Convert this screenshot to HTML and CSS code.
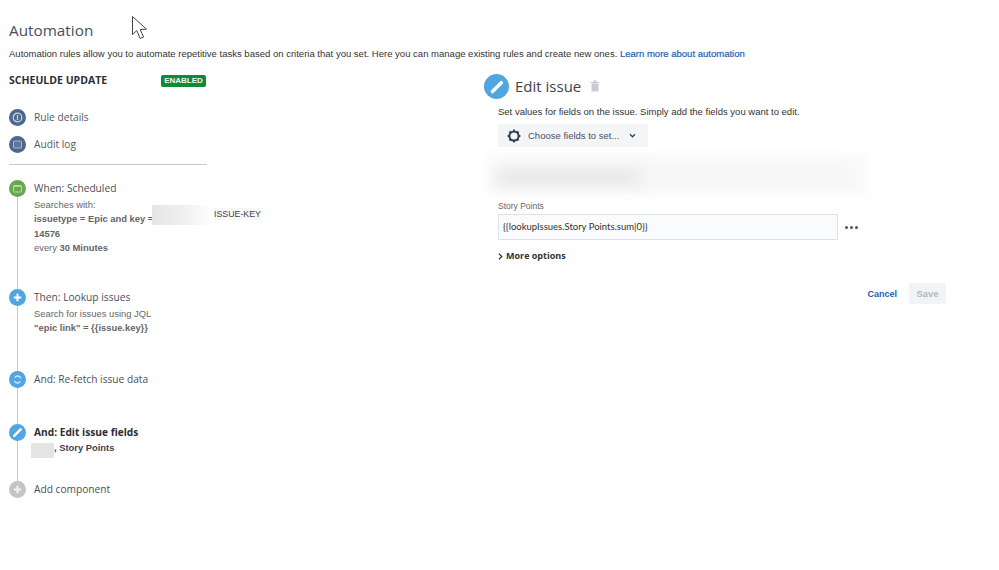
FILE: index.html
```html
<!DOCTYPE html>
<html lang="en">
<head>
<meta charset="utf-8">
<title>Automation</title>
<link rel="stylesheet" href="styles.css">
</head>
<body>
<svg class="cursor" width="18" height="26" viewBox="0 0 18 26"><path d="M1.5 1.5V19.5L5.8 15.6L9.2 23.5L12.6 22L9.2 14.5L15.5 14.2Z" fill="#fff" stroke="#444" stroke-width="1"/></svg>
<header class="page-head">
  <h1>Automation</h1>
  <p>Automation rules allow you to automate repetitive tasks based on criteria that you set. Here you can manage existing rules and create new ones. <a href="#">Learn more about automation</a></p>
</header>
<main class="columns">
  <section class="left">
    <div class="rule-head">
      <h2>SCHEULDE UPDATE</h2>
      <span class="lozenge">ENABLED</span>
    </div>
    <nav class="rule-nav">
      <div class="nav-row">
        <span class="dot navy"><svg width="11" height="11" viewBox="0 0 11 11"><circle cx="5.5" cy="5.5" r="4.3" fill="none" stroke="#cfd8e6" stroke-width="1.2"/><rect x="4.9" y="3" width="1.2" height="5" fill="#cfd8e6"/></svg></span>
        <span>Rule details</span>
      </div>
      <div class="nav-row">
        <span class="dot navy"><svg width="11" height="11" viewBox="0 0 11 11"><rect x="1.5" y="2" width="8" height="7" rx="1" fill="#5d7699" stroke="#a9b8cd"/></svg></span>
        <span>Audit log</span>
      </div>
    </nav>
    <div class="timeline">
      <div class="rail"></div>
      <div class="step step-when">
        <span class="dot green"><svg width="11" height="11" viewBox="0 0 11 11"><rect x="1.5" y="2.5" width="8" height="6.5" rx="1" fill="none" stroke="#bcdcaa" stroke-width="1"/><rect x="1.5" y="2.5" width="8" height="1.4" fill="#bcdcaa"/></svg></span>
        <div class="step-body">
          <h3>When: Scheduled</h3>
          <p class="detail">Searches with:<br><b>issuetype = Epic and key =</b><br><b>14576</b><br>every <b>30 Minutes</b></p>
        </div>
      </div>
      <div class="step step-then">
        <span class="dot blue"><svg width="11" height="11" viewBox="0 0 11 11"><path d="M5.5 1.8V9.2M1.8 5.5H9.2" stroke="#fff" stroke-width="2"/></svg></span>
        <div class="step-body">
          <h3>Then: Lookup issues</h3>
          <p class="detail">Search for issues using JQL<br><b>"epic link" = {{issue.key}}</b></p>
        </div>
      </div>
      <div class="step step-refetch">
        <span class="dot blue"><svg width="11" height="11" viewBox="0 0 11 11"><path d="M8.8 4.2A3.5 3.5 0 0 0 2.6 3.6M2.2 6.8A3.5 3.5 0 0 0 8.4 7.4" fill="none" stroke="#cfe6f6" stroke-width="1.3"/></svg></span>
        <div class="step-body"><h3>And: Re-fetch issue data</h3></div>
      </div>
      <div class="step step-edit">
        <span class="dot blue"><svg width="11" height="11" viewBox="0 0 11 11"><path d="M2.2 8.8L8.6 2.4" stroke="#fff" stroke-width="2.6" stroke-linecap="round"/></svg></span>
        <div class="step-body">
          <h3 class="strong">And: Edit issue fields</h3>
          <p class="detail dark"><b>, Story Points</b></p>
        </div>
      </div>
      <div class="step step-add">
        <span class="dot grey"><svg width="11" height="11" viewBox="0 0 11 11"><path d="M5.5 1.8V9.2M1.8 5.5H9.2" stroke="#f2f2f2" stroke-width="2"/></svg></span>
        <div class="step-body"><h3>Add component</h3></div>
      </div>
      <div class="smudge-key"></div>
      <span class="issue-key">ISSUE-KEY</span>
      <div class="smudge-field"></div>
    </div>
  </section>
  <section class="right">
    <div class="edit-head">
      <span class="dot big blue"><svg width="16" height="16" viewBox="0 0 16 16"><path d="M3.5 12.5L12.3 3.7" stroke="#fff" stroke-width="3.6" stroke-linecap="round"/></svg></span>
      <h2>Edit issue</h2>
      <svg class="trash" width="10" height="12" viewBox="0 0 10 12"><path d="M0.5 2H9.5V3H0.5ZM3.5 0.6H6.5V2H3.5ZM1.5 3.6H8.5V11.5H1.5Z" fill="#c8ccd2"/></svg>
    </div>
    <div class="form">
      <p class="intro">Set values for fields on the issue. Simply add the fields you want to edit.</p>
      <button class="choose" type="button">
        <svg width="14" height="14" viewBox="0 0 14 14"><circle cx="7" cy="7" r="4.6" fill="none" stroke="#2f3d56" stroke-width="2"/><path d="M7 0.6V2.6M7 11.4V13.4M0.6 7H2.6M11.4 7H13.4M2.5 2.5L3.9 3.9M10.1 10.1L11.5 11.5M2.5 11.5L3.9 10.1M10.1 3.9L11.5 2.5" stroke="#2f3d56" stroke-width="1.8"/></svg>
        <span>Choose fields to set...</span>
        <svg class="chev" width="7" height="5" viewBox="0 0 8 6"><path d="M1 1.5L4 4.5L7 1.5" fill="none" stroke="#2f3d56" stroke-width="1.5"/></svg>
      </button>
      <div class="blur-field"><div class="blur-a"></div><div class="blur-b"></div></div>
      <label class="field-label">Story Points</label>
      <div class="field-row">
        <div class="input">{{lookupIssues.Story Points.sum|0}}</div>
        <span class="more-dots"><i></i><i></i><i></i></span>
      </div>
      <div class="more-options">
        <svg width="5" height="7" viewBox="0 0 5 7"><path d="M1 0.8L3.8 3.5L1 6.2" fill="none" stroke="#333" stroke-width="1.2"/></svg>
        <span>More options</span>
      </div>
      <div class="actions">
        <a class="cancel" href="#">Cancel</a>
        <button class="save" type="button">Save</button>
      </div>
    </div>
  </section>
</main>
</body>
</html>
```
FILE: styles.css
```css
* { box-sizing: border-box; }
html, body { margin: 0; height: 100%; }
body {
  position: relative;
  width: 999px;
  height: 570px;
  overflow: hidden;
  background: #fff;
  color: #333;
  font-family: "Liberation Sans", Arial, sans-serif;
  padding: 21px 0 0 9px;
}
h1, h2, h3, p { margin: 0; font-weight: 400; }
.cursor { position: absolute; left: 131px; top: 15px; }
.page-head h1 {
  font: 400 15.3px/19px "Open Sans", sans-serif;
  color: #4a4f57;
}
.page-head p {
  margin-top: 7px;
  font-size: 9.52px;
  line-height: 13px;
  color: #333;
}
.page-head a { color: #1d5fb0; text-decoration: none; -webkit-text-stroke: 0.2px #1d5fb0; }
.columns { display: grid; grid-template-columns: 197px 462px; column-gap: 278px; margin-top: 13px; }
.rule-head { display: flex; align-items: center; justify-content: space-between; height: 14px; }
.rule-head h2 { font: 700 10.5px/14px "Open Sans", sans-serif; color: #2b2f36; }
.lozenge {
  margin-top: 2px;
  width: 45px;
  height: 12px;
  border-radius: 2px;
  background: #11893a;
  color: #eaf6ec;
  font-size: 8px;
  font-weight: 700;
  line-height: 12px;
  text-align: center;
}
.dot {
  display: flex;
  flex: none;
  align-items: center;
  justify-content: center;
  width: 17px;
  height: 17px;
  border-radius: 50%;
}
.dot.big { width: 25px; height: 25px; }
.navy { background: #4c688f; }
.green { background: #6aa84f; }
.blue { background: #4fa6e0; }
.grey { background: #c4c4c4; }
.rule-nav {
  display: flex;
  flex-direction: column;
  gap: 9.5px;
  margin-top: 22px;
  padding-bottom: 11px;
  border-bottom: 1px solid #c9c9c9;
  width: 198px;
}
.nav-row {
  display: flex;
  align-items: center;
  gap: 8px;
  height: 17px;
  font: 400 10.2px/17px "Open Sans", sans-serif;
  color: #555a61;
}
.timeline { position: relative; margin-top: 15px; }
.rail { position: absolute; left: 8px; top: 10px; bottom: 10px; width: 1px; background: #c9c9c9; }
.step { position: relative; display: flex; gap: 8px; }
.step-body h3 { font: 400 10.2px/16px "Open Sans", sans-serif; color: #4a4f57; }
.step-body h3.strong { font-weight: 700; color: #2b2f36; }
.detail { margin-top: 2px; font-size: 9.4px; line-height: 14.5px; color: #666; }
.detail b { font-weight: 700; }
.detail.dark { margin-top: 1px; padding-left: 20px; color: #444; }
.step-when { height: 109px; }
.step-then { height: 82px; }
.step-refetch { height: 53px; }
.step-edit { height: 57px; }
.smudge-key {
  position: absolute;
  left: 143px;
  top: 25px;
  width: 61px;
  height: 20px;
  background: linear-gradient(90deg, #e6e6e6, #efefef 50%, #fff);
}
.issue-key {
  position: absolute;
  left: 205px;
  top: 28px;
  font-size: 8.8px;
  line-height: 12px;
  white-space: nowrap;
  color: #444;
  background: #f7f7f7;
}
.smudge-field {
  position: absolute;
  left: 22px;
  top: 263px;
  width: 23px;
  height: 15px;
  background: #e4e4e4;
}
.edit-head { display: flex; align-items: center; height: 25px; gap: 6px; margin-top: 1px; }
.edit-head h2 { font: 400 15px/25px "Open Sans", sans-serif; color: #3f444b; }
.trash { margin: -1px 0 0 3px; }
.form { padding-left: 14px; }
.intro { margin-top: 6px; font-size: 9.5px; line-height: 13px; color: #333; }
.choose {
  display: flex;
  align-items: center;
  width: 150px;
  height: 23px;
  margin-top: 6px;
  padding: 0 0 0 9px;
  border: 0;
  background: #f4f5f7;
  color: #46526a;
  font-family: "Liberation Sans", sans-serif;
  font-size: 9.5px;
}
.choose span { margin: 0 10px 0 7px; }
.blur-field { position: relative; height: 43px; margin: 5px 0 0 -12px; width: 382px; background: #fbfbfb; filter: blur(3px); }
.blur-a { position: absolute; left: 10px; top: 15px; width: 150px; height: 20px; background: #e9e9e9; filter: blur(6px); }
.blur-b { position: absolute; left: 150px; top: 15px; width: 220px; height: 20px; background: #f5f5f5; filter: blur(7px); }
.field-label { display: block; margin-top: 6px; font-size: 8.5px; line-height: 11px; color: #666; }
.field-row { display: flex; align-items: center; margin-top: 2px; }
.input {
  width: 340px;
  height: 26px;
  padding-left: 4px;
  border: 1px solid #dfe1e6;
  background: #fafbfc;
  font: 400 9.5px/24px Lato, sans-serif;
  color: #333;
}
.more-dots { display: flex; gap: 2px; margin-left: 7px; }
.more-dots i { width: 3px; height: 3px; border-radius: 50%; background: #42526e; }
.more-options {
  display: flex;
  align-items: center;
  gap: 3px;
  margin-top: 9px;
  font: 700 9px/14px "Open Sans", sans-serif;
  color: #333;
}
.actions { display: flex; align-items: center; justify-content: flex-end; gap: 12px; margin-top: 20px; }
.cancel { color: #1d5fb0; font-size: 9px; font-weight: 700; text-decoration: none; }
.save {
  width: 37px;
  height: 21px;
  padding: 0;
  border: 0;
  border-radius: 2px;
  background: #f2f3f5;
  color: #b3b8c0;
  font-family: "Liberation Sans", sans-serif;
  font-size: 9.5px;
  font-weight: 700;
}
```
